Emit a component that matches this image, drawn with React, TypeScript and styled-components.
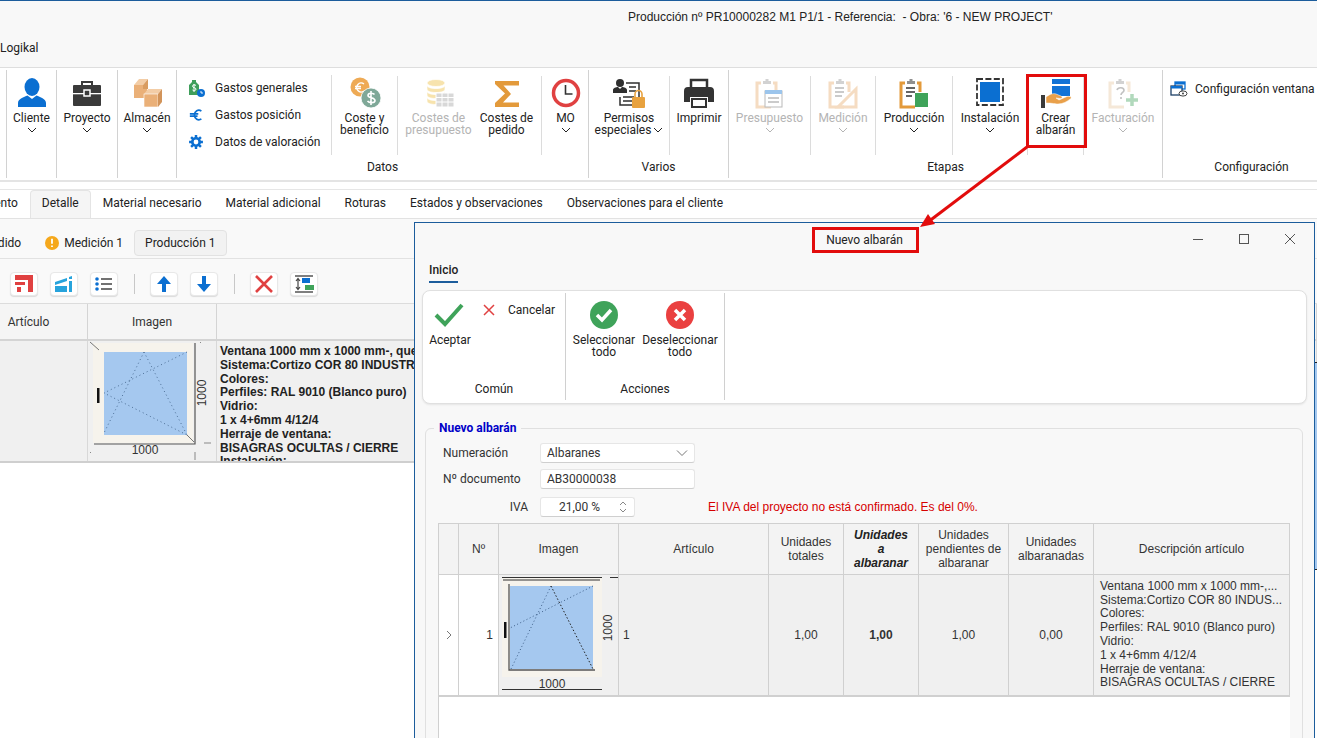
import React from 'react';
import styled, { createGlobalStyle } from 'styled-components';

const GlobalStyle = createGlobalStyle`
  html, body { margin: 0; padding: 0; background: #fff; }
  * { box-sizing: border-box; }
`;

const Page = styled.div`
  position: relative;
  width: 1317px;
  height: 738px;
  overflow: hidden;
  background: #fff;
  color: #222;
  font-family: Roboto, "Liberation Sans", sans-serif;
  font-size: 12px;
  border-top: 1px solid #1c5d9c;
`;

const TitleBar = styled.div`
  height: 67px;
  background: #f8f8f8;
  border-bottom: 1px solid #dedede;
  display: flex;
  flex-direction: column;
`;
const WindowTitle = styled.div`
  padding: 9px 0 0 628px;
  height: 40px;
  line-height: 14px;
  font-family: "Liberation Sans", Arial, sans-serif;
  white-space: nowrap;
`;
const MenuLabel = styled.div`
  line-height: 14px;
`;

const Ribbon = styled.div`
  height: 114px;
  display: flex;
  padding-left: 6px;
  background: #fff;
  border-bottom: 2px solid #e4e4e4;
  overflow: hidden;
`;
const Group = styled.div<{ $w: number; $first?: boolean }>`
  flex: none;
  width: ${(p) => p.$w}px;
  height: 108px;
  margin-top: 2px;
  padding-top: 6px;
  border-right: 1px solid #d2d2d2;
  ${(p) => (p.$first ? 'border-left: 1px solid #d2d2d2; width: ' + (p.$w + 1) + 'px;' : '')}
  display: flex;
  flex-direction: column;
`;
const GroupItems = styled.div`
  display: flex;
  height: 79px;
`;
const GroupLabel = styled.div`
  height: 23px;
  line-height: 25px;
  text-align: center;
`;
const Tool = styled.div<{ $w: number; $sep?: boolean; $off?: boolean; $pl?: number; $pr?: number }>`
  flex: none;
  width: ${(p) => p.$w}px;
  padding: 0 ${(p) => p.$pr ?? 0}px 0 ${(p) => p.$pl ?? 0}px;
  display: flex;
  flex-direction: column;
  align-items: center;
  text-align: center;
  line-height: 12px;
  white-space: nowrap;
  color: ${(p) => (p.$off ? '#b4b4b4' : '#222')};
  border-right: ${(p) => (p.$sep ? '1px solid #dcdcdc' : 'none')};
  svg.icon { flex: none; }
`;
const Chevron = styled.svg`
  display: block;
  margin: 3px auto 0;
`;
const ChevronInline = styled.svg`
  margin-left: 2px;
  vertical-align: 1px;
`;
const SmallList = styled.div<{ $w: number; $pad: number; $sep?: boolean }>`
  flex: none;
  width: ${(p) => p.$w}px;
  padding-left: ${(p) => p.$pad}px;
  margin-top: -1px;
  border-right: ${(p) => (p.$sep ? '1px solid #dcdcdc' : 'none')};
  display: flex;
  flex-direction: column;
`;
const SmallRow = styled.div<{ $gap?: number }>`
  height: 27.5px;
  display: flex;
  align-items: center;
  gap: ${(p) => p.$gap ?? 9}px;
  white-space: nowrap;
`;

const TabStrip = styled.div`
  margin-top: 7px;
  height: 30px;
  display: flex;
  border-top: 1px solid #e6e6e6;
  border-bottom: 1px solid #e2e2e2;
  overflow: hidden;
`;
const Tab = styled.div<{ $active?: boolean; $lead?: number }>`
  flex: none;
  padding: 0 11px;
  margin-left: ${(p) => p.$lead ?? 0}px;
  line-height: 25px;
  background: ${(p) => (p.$active ? '#f5f5f5' : 'transparent')};
  border: 1px solid ${(p) => (p.$active ? '#e4e4e4' : 'transparent')};
  border-bottom: none;
  border-radius: 4px 4px 0 0;
  white-space: nowrap;
`;
const Body = styled.div`
  background: #f9f9f9;
`;
const SubTabs = styled.div`
  height: 40px;
  display: flex;
  align-items: flex-start;
  padding-top: 11px;
  border-bottom: 1px solid #e2e2e2;
  overflow: hidden;
`;
const SubTab = styled.div<{ $active?: boolean; $lead?: number }>`
  flex: none;
  display: flex;
  align-items: center;
  gap: 4px;
  height: 26px;
  padding: 0 10px;
  margin-left: ${(p) => p.$lead ?? 0}px;
  border: 1px solid ${(p) => (p.$active ? '#e2e2e2' : 'transparent')};
  border-radius: 4px;
  background: ${(p) => (p.$active ? '#f2f2f2' : 'transparent')};
  white-space: nowrap;
`;
const Toolbar = styled.div`
  height: 45px;
  display: flex;
  align-items: flex-start;
  gap: 12px;
  padding: 13px 0 0 10px;
  border-bottom: 1px solid #dcdcdc;
`;
const ToolButton = styled.div`
  flex: none;
  width: 28px;
  height: 24px;
  background: #fff;
  border: 1px solid #e8e8e8;
  border-radius: 4px;
  box-shadow: 0 1px 1px rgba(0, 0, 0, 0.12);
  display: flex;
  align-items: center;
  justify-content: center;
`;
const ToolDivider = styled.div`
  flex: none;
  width: 1px;
  height: 20px;
  margin: 2px 3px 0 4px;
  background: #c8c8c8;
`;

const BackTable = styled.div`
  display: grid;
  grid-template-columns: 118px 129px 1fr;
  grid-template-rows: 37px 120px;
  margin-left: -30px;
  border-bottom: 2px solid #cfcfcf;
  height: 159px;
  overflow: hidden;
`;
const BackHead = styled.div`
  background: #f5f5f5;
  border-right: 1px solid #d4d4d4;
  border-bottom: 2px solid #d4d4d4;
  display: flex;
  align-items: center;
  justify-content: center;
  color: #333;
`;
const BackCell = styled.div`
  background: #f0f0f0;
  border-right: 1px solid #d8d8d8;
  overflow: hidden;
`;
const BoldLines = styled.div`
  padding: 4px 0 0 3px;
  font-family: "Liberation Sans", Arial, sans-serif;
  font-weight: 700;
  line-height: 13.8px;
  white-space: nowrap;
  color: #222;
`;

const Modal = styled.div`
  position: absolute;
  left: 414px;
  top: 221px;
  width: 901px;
  height: 540px;
  background: #f8f8f8;
  border: 1px solid #1c5d9c;
  display: flex;
  flex-direction: column;
`;
const ModalHead = styled.div`
  height: 34px;
  flex: none;
  display: flex;
  align-items: center;
  justify-content: center;
  position: relative;
`;
const WinControls = styled.div`
  position: absolute;
  right: 18px;
  top: 10px;
  display: flex;
  gap: 34px;
`;
const ModalTabs = styled.div`
  height: 33px;
  flex: none;
  padding: 6px 0 0 14px;
`;
const ModalTab = styled.div`
  display: inline-block;
  font-weight: 500;
  line-height: 14px;
  padding-bottom: 4px;
  border-bottom: 2px solid #1c5d9c;
  color: #222;
`;
const ModalRibbon = styled.div`
  flex: none;
  margin: 0 7px;
  height: 114px;
  background: #fff;
  border: 1px solid #e0e0e0;
  border-radius: 8px;
  box-shadow: 0 1px 2px rgba(0, 0, 0, 0.08);
  display: flex;
  padding-top: 2px;
`;
const MGroup = styled.div<{ $w: number }>`
  flex: none;
  width: ${(p) => p.$w}px;
  height: 107px;
  border-right: 1px solid #d0d0d0;
  display: flex;
  flex-direction: column;
`;
const MItems = styled.div`
  flex: 1;
  display: flex;
  padding-top: 6px;
`;
const MLabel = styled.div`
  height: 24px;
  line-height: 26px;
  text-align: center;
`;
const MTool = styled.div<{ $w: number }>`
  flex: none;
  width: ${(p) => p.$w}px;
  text-align: center;
  line-height: 12px;
  white-space: nowrap;
  svg { display: block; margin: 0 auto 3px; }
`;
const MSmall = styled.div`
  display: flex;
  align-items: center;
  gap: 12px;
  height: 22px;
  padding-left: 5px;
  white-space: nowrap;
`;

const Fieldset = styled.div`
  flex: none;
  position: relative;
  margin: 24px 0 0 10px;
  width: 878px;
  height: 400px;
  border: 1px solid #e0e0e0;
  border-radius: 6px;
  padding: 14px 12px 0 12px;
`;
const Legend = styled.div`
  position: absolute;
  left: 8px;
  top: -8px;
  padding: 0 5px;
  background: #f8f8f8;
  color: #0000c8;
  font-weight: 700;
  line-height: 14px;
`;
const FormRow = styled.div<{ $mb: number }>`
  display: flex;
  align-items: center;
  height: 20px;
  margin-bottom: ${(p) => p.$mb}px;
`;
const FormLabel = styled.div<{ $right?: boolean }>`
  width: 102px;
  padding-left: 5px;
  ${(p) => (p.$right ? 'text-align: right; padding-right: 12px;' : '')}
  color: #333;
  white-space: nowrap;
`;
const Field = styled.div<{ $w: number; $center?: boolean }>`
  flex: none;
  width: ${(p) => p.$w}px;
  height: 20px;
  background: #fff;
  border: 1px solid #e6e6e6;
  border-bottom-color: #cfcfcf;
  border-radius: 3px;
  display: flex;
  align-items: center;
  justify-content: space-between;
  padding: 0 6px;
  line-height: 14px;
  color: #333;
  ${(p) => (p.$center ? 'padding-left: 18px;' : '')}
`;
const Warning = styled.div`
  margin-left: 73px;
  color: #d60000;
  font-family: "Liberation Sans", Arial, sans-serif;
  white-space: nowrap;
`;

const DataTable = styled.div`
  display: grid;
  grid-template-columns: 20px 40px 120px 150px 75px 75px 90px 85px 196px;
  grid-template-rows: 51px 122px 60px;
  margin-top: 6px;
  width: 852px;
  background: #fff;
  border: 1px solid #d0d0d0;
  font-family: "Liberation Sans", Arial, sans-serif;
  color: #333;
  line-height: 14px;
`;
const HeadCell = styled.div<{ $strong?: boolean }>`
  background: #f3f3f3;
  border-right: 1px solid #d0d0d0;
  border-bottom: 1px solid #d0d0d0;
  display: flex;
  align-items: center;
  justify-content: center;
  text-align: center;
  font-weight: ${(p) => (p.$strong ? 700 : 400)};
  font-style: ${(p) => (p.$strong ? 'italic' : 'normal')};
  color: ${(p) => (p.$strong ? '#222' : '#333')};
`;
const Cell = styled.div<{ $blank?: boolean; $strong?: boolean; $align?: string; $pl?: number; $pr?: number }>`
  background: ${(p) => (p.$blank ? '#fff' : '#f0f0f0')};
  border-right: 1px solid #d0d0d0;
  border-bottom: 2px solid #d0d0d0;
  padding: 0 ${(p) => p.$pr ?? 0}px 0 ${(p) => p.$pl ?? 0}px;
  display: flex;
  align-items: center;
  justify-content: ${(p) => p.$align ?? 'center'};
  font-weight: ${(p) => (p.$strong ? 700 : 400)};
  overflow: hidden;
`;
const DescLines = styled.div`
  padding: 0 0 0 6px;
  line-height: 13.8px;
  white-space: nowrap;
`;
const EmptyRow = styled.div`
  grid-column: 1 / -1;
  background: #fff;
`;

const Callout = styled.div<{ $l: number; $t: number; $w: number; $h: number }>`
  position: absolute;
  left: ${(p) => p.$l}px;
  top: ${(p) => p.$t}px;
  width: ${(p) => p.$w}px;
  height: ${(p) => p.$h}px;
  border: 3px solid #e20c0c;
`;
const ArrowOverlay = styled.svg`
  position: absolute;
  left: 900px;
  top: 130px;
`;
const EdgeSliver = styled.div`
  position: absolute;
  left: 1315px;
  top: 361px;
  width: 2px;
  height: 208px;
  background: #a5c8ef;
  border-top: 1px solid #222;
  border-bottom: 1px solid #222;
`;

const Chev = () => (
  <Chevron width="10" height="6" viewBox="0 0 10 6">
    <path d="M1 1l4 4 4-4" fill="none" stroke="currentColor" strokeWidth="1" />
  </Chevron>
);

const Br = () => <br />;

const Icon = ({ children, w = 36, h = 36 }: { children: React.ReactNode; w?: number; h?: number }) => (
  <svg className="icon" width={w} height={h} viewBox={`0 0 ${w} ${h}`}>
    {children}
  </svg>
);

const UserIcon = () => (
  <Icon>
    <ellipse cx="18" cy="11" rx="7.5" ry="9" fill="#0b6fd1" />
    <path d="M4 31v-4c0-4 6-6 9.500-7.500L18 23l4.500-3.500C26 21 32 23 32 27v4z" fill="#0b6fd1" />
  </Icon>
);
const BriefcaseIcon = () => (
  <Icon>
    <path d="M13 9V6h10v3" fill="none" stroke="#3a3a3a" strokeWidth="2" />
    <rect x="4" y="9" width="28" height="21" rx="1" fill="#3a3a3a" />
    <rect x="4" y="17" width="28" height="1.300" fill="#fff" />
    <rect x="15" y="14" width="6" height="6" fill="#3a3a3a" stroke="#fff" strokeWidth="1.500" />
  </Icon>
);
const BoxesIcon = () => (
  <Icon>
    <path d="M5 9l5-6h9l-5 6z" fill="#f3cda6" />
    <rect x="5" y="9" width="13" height="13" fill="#eab078" />
    <path d="M14 9l5-6v10h-5z" fill="#d99c60" />
    <path d="M15 18l4-5h14l-4 5z" fill="#f3cda6" />
    <rect x="15" y="18" width="14" height="13" fill="#eab078" stroke="#fff" strokeWidth="0.600" />
    <path d="M29 18l4-5v13l-4 5z" fill="#d2945a" />
  </Icon>
);
const CoinsIcon = () => (
  <Icon>
    <circle cx="13" cy="11" r="9.500" fill="#eeaa55" />
    <path d="M17 8a4.500 4.500 0 1 0 0 7M8 10.500h6M8 12.500h6" fill="none" stroke="#fff" strokeWidth="1.300" />
    <circle cx="24" cy="22" r="10" fill="#7fa898" stroke="#fff" strokeWidth="0.800" />
    <path d="M27.500 18.500c-1-1.500-6.500-2-6.500 1 0 3 7 1.500 7 5 0 3-6 2.500-7.500 .5M24 15v14" fill="none" stroke="#fff" strokeWidth="1.600" />
  </Icon>
);
const CoinStackIcon = () => (
  <Icon>
    <g fill="#f7e3ad" stroke="#fff" strokeWidth="0.700">
      <ellipse cx="15" cy="7" rx="9" ry="3.500" />
      <path d="M6 9c0 2 3 3.500 9 3.500s9-1.500 9-3.500v4c0 2-3 3.500-9 3.500s-9-1.500-9-3.500z" />
      <path d="M6 15c0 2 3 3.500 9 3.500s9-1.500 9-3.500v4c0 2-3 3.500-9 3.500s-9-1.500-9-3.500z" />
      <path d="M6 21c0 2 3 3.500 9 3.500s9-1.500 9-3.500v4c0 2-3 3.500-9 3.500s-9-1.500-9-3.500z" />
    </g>
    <rect x="15" y="17" width="18" height="14" fill="#d8d8d8" stroke="#fff" />
    <path d="M15 21.500h18M15 26h18M21 17v14M27 17v14" stroke="#fff" strokeWidth="1" />
  </Icon>
);
const SigmaIcon = () => (
  <Icon>
    <path d="M6 5h24v4.500H14.500l7.500 8.500-8 8.500H30V31H6v-4l10-9.500L6 8z" fill="#e39a3b" />
  </Icon>
);
const ClockIcon = () => (
  <Icon>
    <circle cx="18" cy="17" r="12.500" fill="#fff" stroke="#e04141" strokeWidth="3.500" />
    <path d="M17.500 9v9h7" fill="none" stroke="#333" strokeWidth="1.600" />
  </Icon>
);
const PermisosIcon = () => (
  <Icon>
    <path d="M15 7h13v22H9v-8" fill="none" stroke="#2f2f2f" strokeWidth="1.500" />
    <path d="M18 11h7M18 15h7M12 25h11M12 21h11" stroke="#2f2f2f" strokeWidth="1.500" />
    <circle cx="9" cy="7" r="4" fill="#2f2f2f" />
    <path d="M2 17v-3c0-2 3-3 5-3l2 2 2-2c2 0 5 1 5 3v3z" fill="#2f2f2f" />
    <rect x="21" y="21" width="13" height="11" rx="1" fill="#e8a23f" />
    <path d="M24 21v-3a3.500 3.500 0 0 1 7 0v3" fill="none" stroke="#e8a23f" strokeWidth="1.600" />
  </Icon>
);
const PrinterIcon = () => (
  <Icon>
    <path d="M10 12V4h16v8" fill="none" stroke="#333" strokeWidth="2.500" />
    <path d="M7 11h22a4 4 0 0 1 4 4v11h-6v-5H9v5H3V15a4 4 0 0 1 4-4z" fill="#333" />
    <rect x="11" y="23" width="14" height="8" fill="#fff" stroke="#333" strokeWidth="2" />
  </Icon>
);
const Clip = ({ color }: { color: string }) => (
  <>
    <path d="M9 7H5v24h14" fill="none" stroke={color} strokeWidth="3" />
    <path d="M21 7h3v9" fill="none" stroke={color} strokeWidth="3" />
    <path d="M11 7V5h2.500V3h3v2H19v3h-8z" fill="#7c7c7c" opacity="0.85" />
  </>
);
const PresupuestoIcon = () => (
  <Icon>
    <g opacity="0.4">
      <Clip color="#e8a968" />
      <rect x="13" y="15" width="17" height="16" fill="#fff" stroke="#555" />
      <rect x="13" y="14" width="17" height="4" fill="#0b6fd1" />
      <path d="M16 22h11M16 26h11" stroke="#555" strokeWidth="1.300" />
    </g>
  </Icon>
);
const MedicionIcon = () => (
  <Icon>
    <g opacity="0.4">
      <Clip color="#e8a968" />
      <path d="M10 12h9M10 16h9M10 20h7" stroke="#555" strokeWidth="1.500" />
      <path d="M31 13v18H13z" fill="none" stroke="#e8a968" strokeWidth="3" />
    </g>
  </Icon>
);
const ProduccionIcon = () => (
  <Icon>
    <Clip color="#e39a3b" />
    <path d="M10 12h9M10 16h9M10 20h6" stroke="#333" strokeWidth="1.500" />
    <rect x="19" y="17" width="13" height="14" fill="#3fa35a" />
  </Icon>
);
const InstalacionIcon = () => (
  <Icon>
    <rect x="8" y="6" width="20" height="20" fill="#0b6fd1" />
    <rect x="5" y="3" width="26" height="26" fill="none" stroke="#333" strokeWidth="1.800" strokeDasharray="6 2.400" />
  </Icon>
);
const AlbaranIcon = () => (
  <Icon>
    <rect x="14" y="3" width="18" height="5" fill="#1273d6" />
    <rect x="14" y="10" width="18" height="10" fill="#1273d6" />
    <rect x="3" y="19" width="4" height="13" fill="#3a3a3a" />
    <path d="M8 21c4-3 7-4 10-3l5 2c2 1 1 3-1 2.500l-4-.5 3 2 8-3.500c3-.5 5 .5 4 2-4 3-8 5.500-13 5.500-3 0-6-1-12-1z" fill="#e9a04a" stroke="#fff" strokeWidth="0.500" />
  </Icon>
);
const FacturacionIcon = () => (
  <Icon>
    <g opacity="0.4">
      <Clip color="#e8c89f" />
      <path d="M12 14c1-3 7-3 7 .5 0 2-3 2-3 4.500M16 21v2" fill="none" stroke="#666" strokeWidth="1.600" />
      <path d="M21 24h12M27 18v12" stroke="#3fa35a" strokeWidth="3.500" />
    </g>
  </Icon>
);

const TagIcon = () => (
  <svg width="20" height="20" viewBox="0 0 20 20">
    <path d="M3 17V7l3-3V2h4v2l3 3v10z" fill="#3f9e5b" />
    <path d="M10 7.500c-1-1-3.500-1-3.500 .8s3.500 1 3.500 2.800-2.500 1.800-3.500 .9M8 6v8" fill="none" stroke="#fff" strokeWidth="1" />
    <circle cx="15" cy="15" r="4" fill="#0b6fd1" />
    <path d="M15 13v2h2" fill="none" stroke="#fff" strokeWidth="0.900" />
  </svg>
);
const EuroIcon = () => (
  <svg width="20" height="20" viewBox="-3 -3 26 26">
    <path d="M17 5c-4-3-9 0-9 5s5 8 9 5M2 8.500h11M2 11.500h10" fill="none" stroke="#0b6fd1" strokeWidth="2.200" />
  </svg>
);
const GearIcon = () => (
  <svg width="20" height="20" viewBox="-3 -3 26 26">
    <circle cx="10" cy="10" r="4.800" fill="none" stroke="#0b6fd1" strokeWidth="3.400" />
    <path d="M10 1v4M10 15v4M1 10h4M15 10h4M3.600 3.600l2.800 2.800M13.600 13.600l2.800 2.800M16.400 3.600l-2.800 2.800M6.400 13.600l-2.800 2.800" stroke="#0b6fd1" strokeWidth="3.200" />
  </svg>
);
const ConfigIcon = () => (
  <svg width="18" height="18" viewBox="0 0 18 18">
    <rect x="5" y="2" width="10" height="7" fill="#fff" stroke="#0b6fd1" strokeWidth="1.300" />
    <rect x="5" y="2" width="10" height="2.500" fill="#0b6fd1" />
    <rect x="1" y="6" width="11" height="9" fill="#fff" stroke="#1d3f66" strokeWidth="1.300" />
    <rect x="1" y="6" width="11" height="2.500" fill="#0b6fd1" />
    <ellipse cx="13" cy="13.500" rx="4" ry="2.600" fill="#fff" stroke="#444" />
    <circle cx="13" cy="13.500" r="1" fill="#444" />
  </svg>
);

const WarnDot = () => (
  <svg width="16" height="16" viewBox="0 0 16 16">
    <circle cx="8" cy="8" r="7" fill="#f5a81c" />
    <path d="M8 3.800v5M8 10.500v1.600" stroke="#fff" strokeWidth="1.800" />
  </svg>
);

const MiniIcon = ({ children }: { children: React.ReactNode }) => (
  <ToolButton>
    <svg width="24" height="20" viewBox="0 0 24 20">
      {children}
    </svg>
  </ToolButton>
);

const WindowBackdrop = () => (
  <svg width="129" height="120" viewBox="0 0 129 120">
    <rect x="5" y="2" width="100" height="100" fill="#f6f3ec" />
    <rect x="16" y="11" width="83" height="83" fill="#a5c8ef" />
    <path d="M2 1l9 8M99 94l7 7" stroke="#555" strokeWidth="0.800" />
    <path d="M107 2v101H6" fill="none" stroke="#555" strokeWidth="1.200" />
    <path d="M116 102h7M107 111v8M2 112l1-1M112 1l1 1" stroke="#888" strokeWidth="1" />
    <rect x="9" y="47" width="2.500" height="15" fill="#111" />
    <path d="M56 11L16 92M56 11l43 83M99 11L16 52l83 42" fill="none" stroke="#4d6f96" strokeWidth="1" strokeDasharray="1 3" />
    <text x="57" y="113" textAnchor="middle" fontSize="12" fontFamily="Liberation Sans" fill="#333">1000</text>
    <text x="0" y="0" transform="translate(118 52) rotate(-90)" textAnchor="middle" fontSize="12" fontFamily="Liberation Sans" fill="#333">1000</text>
  </svg>
);

const WindowModalThumb = () => (
  <svg width="119" height="120" viewBox="0 0 119 120">
    <rect x="3" y="3" width="100" height="99" fill="#f6f3ec" />
    <rect x="11" y="11" width="83" height="83" fill="#a5c8ef" />
    <path d="M3 2.500h100M4 5h97" stroke="#333" strokeWidth="1" />
    <path d="M111 2.500h8" stroke="#333" strokeWidth="1" />
    <path d="M10 9v86h86" fill="none" stroke="#555" strokeWidth="1.300" />
    <rect x="5" y="47" width="2.500" height="16" fill="#111" />
    <path d="M52 11L12 94M94 11L11 53" fill="none" stroke="#3e5f88" strokeWidth="1" strokeDasharray="1 2.500" />
    <path d="M52 11l42 83" fill="none" stroke="#222" strokeWidth="1" strokeDasharray="1.500 2" />
    <path d="M3 114.500h100" stroke="#333" strokeWidth="1" />
    <text x="53" y="113" textAnchor="middle" fontSize="12" fontFamily="Liberation Sans" fill="#333">1000</text>
    <text x="0" y="0" transform="translate(113 53) rotate(-90)" textAnchor="middle" fontSize="12" fontFamily="Liberation Sans" fill="#333">1000</text>
  </svg>
);

const cols = ['', 'Nº', 'Imagen', 'Artículo'];

export default function App() {
  return (
    <Page>
      <GlobalStyle />
      <TitleBar>
        <WindowTitle>Producción nº PR10000282 M1 P1/1 - Referencia:&nbsp; - Obra: '6 - NEW PROJECT'</WindowTitle>
        <MenuLabel>Logikal</MenuLabel>
      </TitleBar>

      <Ribbon>
        <Group $w={50} $first>
          <GroupItems>
            <Tool $w={49}>
              <UserIcon />
              Cliente
              <Chev />
            </Tool>
          </GroupItems>
        </Group>
        <Group $w={61}>
          <GroupItems>
            <Tool $w={60}>
              <BriefcaseIcon />
              Proyecto
              <Chev />
            </Tool>
          </GroupItems>
        </Group>
        <Group $w={59}>
          <GroupItems>
            <Tool $w={58}>
              <BoxesIcon />
              Almacén
              <Chev />
            </Tool>
          </GroupItems>
        </Group>
        <Group $w={412}>
          <GroupItems>
            <SmallList $w={155} $pad={9} $sep>
              <SmallRow><TagIcon />Gastos generales</SmallRow>
              <SmallRow><EuroIcon />Gastos posición</SmallRow>
              <SmallRow><GearIcon />Datos de valoración</SmallRow>
            </SmallList>
            <Tool $w={66} $sep>
              <CoinsIcon />
              Coste y<Br />beneficio
            </Tool>
            <Tool $w={81} $off>
              <CoinStackIcon />
              Costes de<Br />presupuesto
            </Tool>
            <Tool $w={63} $sep $pr={7}>
              <SigmaIcon />
              Costes de<Br />pedido
            </Tool>
            <Tool $w={46} $pl={1}>
              <ClockIcon />
              MO
              <Chev />
            </Tool>
          </GroupItems>
          <GroupLabel>Datos</GroupLabel>
        </Group>
        <Group $w={140}>
          <GroupItems>
            <Tool $w={81} $sep>
              <PermisosIcon />
              Permisos
              <span>
                especiales
                <ChevronInline width="10" height="6" viewBox="0 0 10 6">
                  <path d="M1 1l4 4 4-4" fill="none" stroke="currentColor" strokeWidth="1" />
                </ChevronInline>
              </span>
            </Tool>
            <Tool $w={58}>
              <PrinterIcon />
              Imprimir
            </Tool>
          </GroupItems>
          <GroupLabel>Varios</GroupLabel>
        </Group>
        <Group $w={434}>
          <GroupItems>
            <Tool $w={82} $sep $off>
              <PresupuestoIcon />
              Presupuesto
              <Chev />
            </Tool>
            <Tool $w={65} $sep $off>
              <MedicionIcon />
              Medición
              <Chev />
            </Tool>
            <Tool $w={77} $sep>
              <ProduccionIcon />
              Producción
              <Chev />
            </Tool>
            <Tool $w={75} $sep>
              <InstalacionIcon />
              Instalación
              <Chev />
            </Tool>
            <Tool $w={56} $sep>
              <AlbaranIcon />
              Crear<Br />albarán
            </Tool>
            <Tool $w={78} $off>
              <FacturacionIcon />
              Facturación
              <Chev />
            </Tool>
          </GroupItems>
          <GroupLabel>Etapas</GroupLabel>
        </Group>
        <Group $w={178}>
          <GroupItems>
            <SmallList $w={178} $pad={7}>
              <SmallRow $gap={7}><ConfigIcon />Configuración ventana</SmallRow>
            </SmallList>
          </GroupItems>
          <GroupLabel>Configuración</GroupLabel>
        </Group>
      </Ribbon>

      <TabStrip>
        <Tab $lead={-56}>Documento</Tab>
        <Tab $active>Detalle</Tab>
        <Tab>Material necesario</Tab>
        <Tab>Material adicional</Tab>
        <Tab>Roturas</Tab>
        <Tab>Estados y observaciones</Tab>
        <Tab>Observaciones para el cliente</Tab>
      </TabStrip>

      <Body>
        <SubTabs>
          <SubTab $lead={-27}>Pedido</SubTab>
          <SubTab $lead={1}><WarnDot />Medición 1</SubTab>
          <SubTab $active>Producción 1</SubTab>
        </SubTabs>
        <Toolbar>
          <MiniIcon>
            <path d="M3 1h18v17h-5V6H3z" fill="#e04141" />
            <path d="M3 8h10v3H3zM5 13h4v5H5z" fill="#e04141" />
          </MiniIcon>
          <MiniIcon>
            <path d="M3 8l12-4v3L3 11zM3 12h12v6H3z" fill="#27a3dc" />
            <path d="M17 7h3v11h-3zM17 3l3-1v3h-3z" fill="#27a3dc" />
          </MiniIcon>
          <MiniIcon>
            <circle cx="5" cy="5" r="1.800" fill="#0b6fd1" />
            <circle cx="5" cy="10" r="1.800" fill="#0b6fd1" />
            <circle cx="5" cy="15" r="1.800" fill="#0b6fd1" />
            <path d="M9 5h11M9 10h11M9 15h11" stroke="#444" strokeWidth="1.300" />
          </MiniIcon>
          <ToolDivider />
          <MiniIcon>
            <path d="M12 2l7 8h-5v8h-4v-8H5z" fill="#0b6fd1" />
          </MiniIcon>
          <MiniIcon>
            <path d="M12 18l-7-8h5V2h4v8h5z" fill="#0b6fd1" />
          </MiniIcon>
          <ToolDivider />
          <MiniIcon>
            <path d="M4 2l16 16M20 2L4 18" stroke="#e04141" strokeWidth="2.600" />
          </MiniIcon>
          <MiniIcon>
            <path d="M3 2h18M3 18h18" stroke="#555" strokeWidth="1.300" />
            <path d="M6 5v10M4 7l2-2.500L8 7M4 13l2 2.500L8 13" fill="none" stroke="#444" strokeWidth="1.200" />
            <rect x="10" y="4" width="8" height="5" fill="#0b6fd1" />
            <rect x="13" y="11" width="9" height="5" fill="#3fa35a" />
          </MiniIcon>
        </Toolbar>
        <BackTable>
          <BackHead>Artículo</BackHead>
          <BackHead>Imagen</BackHead>
          <BackHead />
          <BackCell />
          <BackCell><WindowBackdrop /></BackCell>
          <BackCell>
            <BoldLines>
              Ventana 1000 mm x 1000 mm-, que<Br />
              Sistema:Cortizo COR 80 INDUSTRIAL<Br />
              Colores:<Br />
              Perfiles: RAL 9010 (Blanco puro)<Br />
              Vidrio:<Br />
              1 x 4+6mm 4/12/4<Br />
              Herraje de ventana:<Br />
              BISAGRAS OCULTAS / CIERRE<Br />
              Instalación:
            </BoldLines>
          </BackCell>
        </BackTable>
      </Body>

      <EdgeSliver />

      <Modal>
        <ModalHead>
          Nuevo albarán
          <WinControls>
            <svg width="12" height="12" viewBox="0 0 12 12"><path d="M1 6.500h10" stroke="#555" /></svg>
            <svg width="12" height="12" viewBox="0 0 12 12"><rect x="1.500" y="1.500" width="9" height="9" fill="none" stroke="#555" /></svg>
            <svg width="12" height="12" viewBox="0 0 12 12"><path d="M1 1l10 10M11 1L1 11" stroke="#555" /></svg>
          </WinControls>
        </ModalHead>
        <ModalTabs><ModalTab>Inicio</ModalTab></ModalTabs>
        <ModalRibbon>
          <MGroup $w={143}>
            <MItems>
              <MTool $w={54}>
                <svg width="32" height="32" viewBox="0 0 32 32">
                  <path d="M2 16l9 9L28 6" fill="none" stroke="#3fa35a" strokeWidth="4" />
                </svg>
                Aceptar
              </MTool>
              <div>
                <MSmall>
                  <svg width="14" height="14" viewBox="0 0 14 14">
                    <path d="M2 2l10 10M12 2L2 12" stroke="#e04141" strokeWidth="1.500" />
                  </svg>
                  Cancelar
                </MSmall>
              </div>
            </MItems>
            <MLabel>Común</MLabel>
          </MGroup>
          <MGroup $w={159}>
            <MItems>
              <MTool $w={76}>
                <svg width="32" height="32" viewBox="0 0 32 32">
                  <circle cx="16" cy="16" r="14" fill="#3fa35a" />
                  <path d="M9 16l5 5 9-10" fill="none" stroke="#fff" strokeWidth="3.500" />
                </svg>
                Seleccionar<Br />todo
              </MTool>
              <MTool $w={76}>
                <svg width="32" height="32" viewBox="0 0 32 32">
                  <circle cx="16" cy="16" r="14" fill="#ea4040" />
                  <path d="M11 11l10 10M21 11L11 21" stroke="#fff" strokeWidth="3.500" />
                </svg>
                Deseleccionar<Br />todo
              </MTool>
            </MItems>
            <MLabel>Acciones</MLabel>
          </MGroup>
        </ModalRibbon>

        <Fieldset>
          <Legend>Nuevo albarán</Legend>
          <FormRow $mb={6}>
            <FormLabel>Numeración</FormLabel>
            <Field $w={155}>
              Albaranes
              <svg width="12" height="8" viewBox="0 0 12 8"><path d="M1 1.500l5 5 5-5" fill="none" stroke="#777" /></svg>
            </Field>
          </FormRow>
          <FormRow $mb={8}>
            <FormLabel>Nº documento</FormLabel>
            <Field $w={155}>AB30000038</Field>
          </FormRow>
          <FormRow $mb={0}>
            <FormLabel $right>IVA</FormLabel>
            <Field $w={95} $center>
              21,00 %
              <svg width="10" height="14" viewBox="0 0 10 14"><path d="M2 5l3-3 3 3M2 9l3 3 3-3" fill="none" stroke="#888" /></svg>
            </Field>
            <Warning>El IVA del proyecto no está confirmado. Es del 0%.</Warning>
          </FormRow>
          <DataTable>
            {cols.map((c) => (
              <HeadCell key={c || 'exp'}>{c}</HeadCell>
            ))}
            <HeadCell>Unidades<Br />totales</HeadCell>
            <HeadCell $strong>Unidades<Br />a<Br />albaranar</HeadCell>
            <HeadCell>Unidades<Br />pendientes de<Br />albaranar</HeadCell>
            <HeadCell>Unidades<Br />albaranadas</HeadCell>
            <HeadCell>Descripción artículo</HeadCell>

            <Cell $blank>
              <svg width="8" height="10" viewBox="0 0 8 10"><path d="M2 1l4 4-4 4" fill="none" stroke="#777" /></svg>
            </Cell>
            <Cell $blank $align="flex-end" $pr={5}>1</Cell>
            <Cell $align="flex-start"><WindowModalThumb /></Cell>
            <Cell $align="flex-start" $pl={4}>1</Cell>
            <Cell>1,00</Cell>
            <Cell $strong>1,00</Cell>
            <Cell>1,00</Cell>
            <Cell>0,00</Cell>
            <Cell $align="flex-start">
              <DescLines>
                Ventana 1000 mm x 1000 mm-,...<Br />
                Sistema:Cortizo COR 80 INDUS...<Br />
                Colores:<Br />
                Perfiles: RAL 9010 (Blanco puro)<Br />
                Vidrio:<Br />
                1 x 4+6mm 4/12/4<Br />
                Herraje de ventana:<Br />
                BISAGRAS OCULTAS / CIERRE
              </DescLines>
            </Cell>
            <EmptyRow />
          </DataTable>
        </Fieldset>
      </Modal>

      <Callout $l={1026} $t={73} $w={61} $h={74} />
      <Callout $l={812} $t={226} $w={107} $h={26} />
      <ArrowOverlay width="140" height="110" viewBox="0 0 140 110">
        <path d="M127 16L28 91" stroke="#e20c0c" strokeWidth="3" />
        <path d="M20 96l8-13 7 10z" fill="#e20c0c" />
      </ArrowOverlay>
    </Page>
  );
}
